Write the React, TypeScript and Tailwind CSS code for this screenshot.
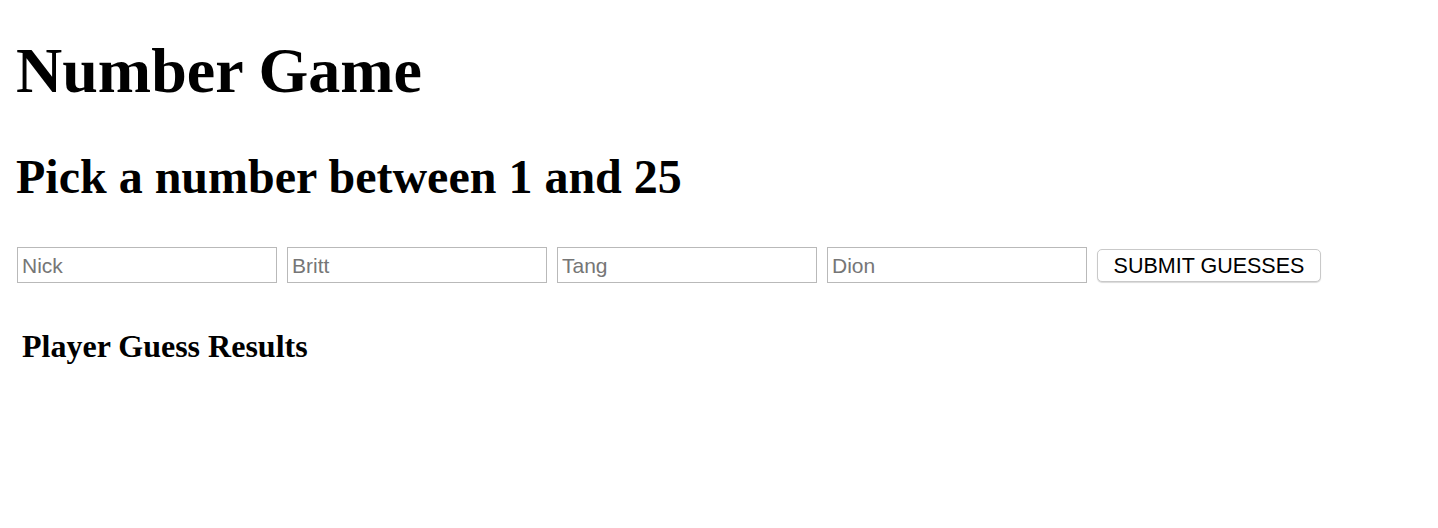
const players = ["Nick", "Britt", "Tang", "Dion"];

export default function App() {
    return (
        <div className="min-h-[528px] bg-white px-4 text-black" style={{ fontFamily: '"Liberation Serif", "Times New Roman", serif' }}>
            <h1 className="pt-[35px] text-[64px] font-bold leading-[72px]">Number Game</h1>
            <h2 className="mt-[42px] text-[48px] font-bold leading-[56px]">Pick a number between 1 and 25</h2>

            <div className="mt-[42px] flex items-center gap-[10px] pl-px">
                {players.map((name) => (
                    <input
                        key={name}
                        type="text"
                        placeholder={name}
                        className="h-[36px] w-[260px] border border-[#b9b9b9] bg-white px-[4px] pt-px font-['Liberation_Sans',Arial,sans-serif] text-[21px] text-black outline-none placeholder:text-[#767676]"
                    />
                ))}
                <button className="h-[33px] w-[224px] rounded-[5px] border border-[#c9c9c9] bg-white pt-[4px] font-['Liberation_Sans',Arial,sans-serif] text-[21.5px] leading-none text-black shadow-[0_1px_1px_rgba(0,0,0,0.15)]">
                    SUBMIT GUESSES
                </button>
            </div>

            <h3 className="ml-[6px] mt-[43px] text-[32px] font-bold leading-[40px]">Player Guess Results</h3>
        </div>
    );
}
